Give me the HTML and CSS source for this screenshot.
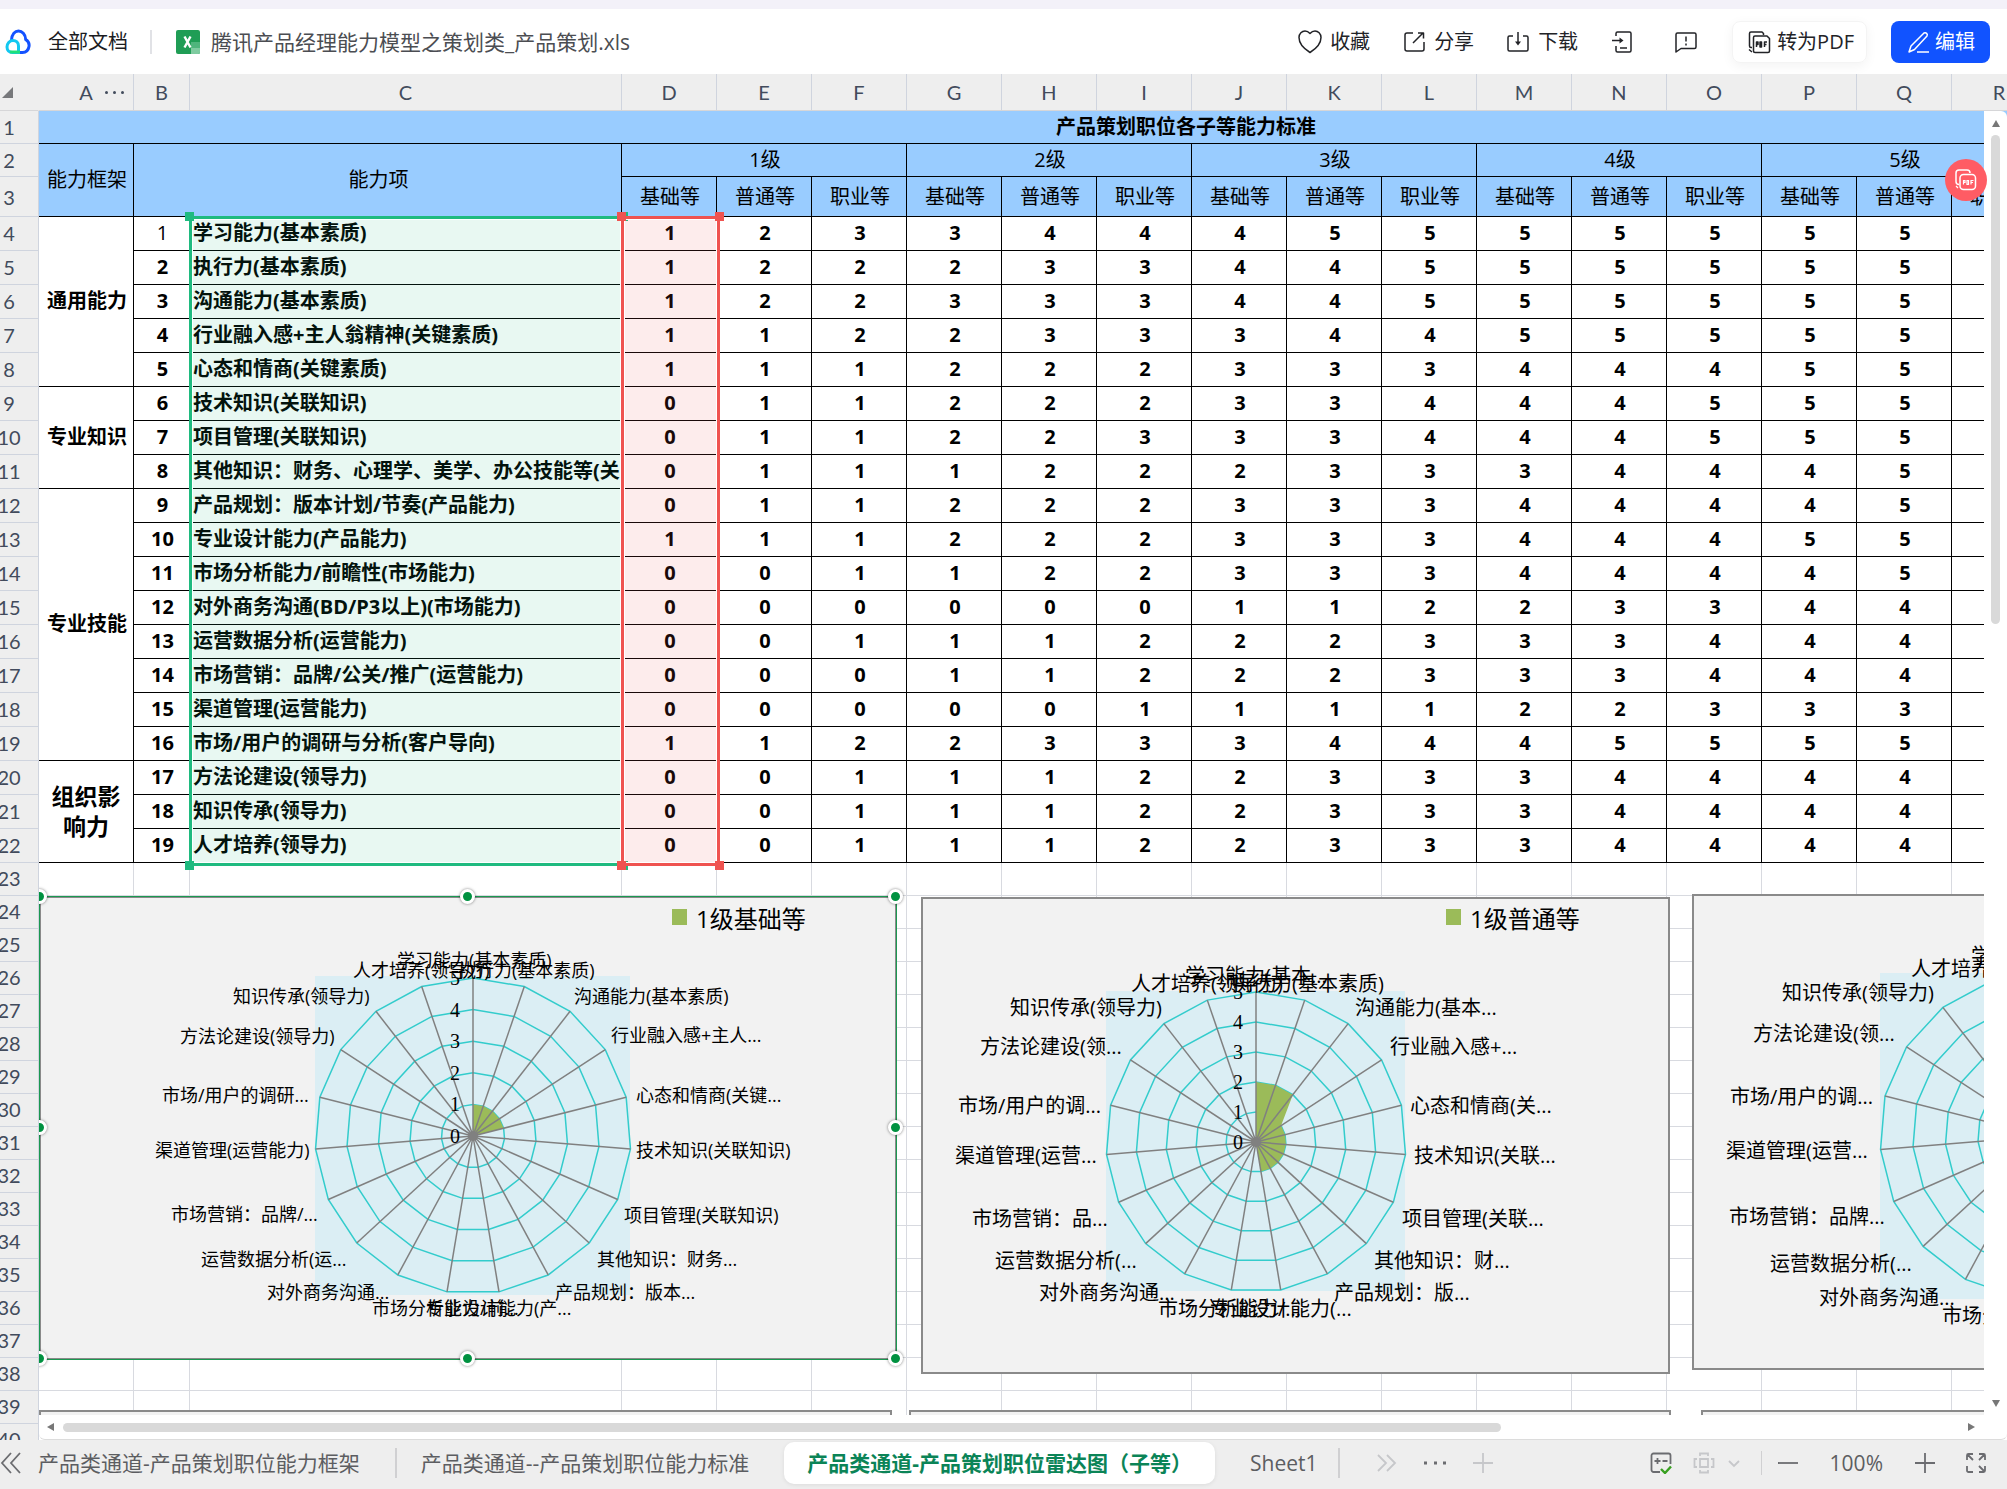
FILE: index.html
```html
<!DOCTYPE html>
<html lang="zh-CN">
<head>
<meta charset="utf-8">
<title>腾讯产品经理能力模型之策划类_产品策划.xls</title>
<link rel="stylesheet" href="styles.css">
</head>
<body>
<header class="topbar">
  <a class="home" href="#">
    <svg class="logo" width="26" height="26" viewBox="0 0 26 26" fill="none" stroke-width="3">
      <path d="M6.500 11C7 5 10 2 13.500 2s7 3 7.200 8.500c2.500 1.500 3.800 4 3.300 7-.6 3.500-3 6-6.500 6H15" stroke="#1452ff"/>
      <path d="M15 23.500H7.500C4 23.500 2 21 2 18c0-3.500 2.500-6.500 6-6.500 3 0 5.500 2 5.500 5.500v6.500" stroke="#12c8f0"/>
      <path d="M5 23h10" stroke="#1fe07a"/>
    </svg>
    <span>全部文档</span>
  </a>
  <span class="divider"></span>
  <div class="file">
    <svg width="24" height="24" viewBox="0 0 24 24">
      <rect width="24" height="24" rx="2" fill="#1f9d55"/>
      <path d="M15 12h9v10a2 2 0 0 1-2 2h-7z" fill="#4fb57c"/>
      <path d="M15 18h9v4a2 2 0 0 1-2 2h-7z" fill="#7fcba0"/>
      <path d="M8.500 6.500l6 11M14.500 6.500l-6 11" stroke="#fff" stroke-width="2.400" fill="none"/>
    </svg>
    <span>腾讯产品经理能力模型之策划类_产品策划.xls</span>
  </div>
  <div class="actions">
    <button class="action" type="button">
      <svg class="icon" viewBox="0 0 24 24"><path d="M12 22.500C8 20 1 14.500 1 7.500 1 3.500 4 1 7 1c2 0 3.500.8 5 2.500C13.500 1.800 15 1 17 1c3 0 6 2.500 6 6.500 0 7-7 12.500-11 15z"/></svg>
      <span>收藏</span>
    </button>
    <button class="action" type="button">
      <svg class="icon" viewBox="0 0 24 24"><path d="M11 3H5a2 2 0 0 0-2 2v14a2 2 0 0 0 2 2h15a2 2 0 0 0 2-2v-7M11 13 21 3M16 3h5.500v5.500"/></svg>
      <span>分享</span>
    </button>
    <button class="action" type="button">
      <svg class="icon" viewBox="0 0 24 24"><path d="M7 6H3.500A1.500 1.500 0 0 0 2 7.500v12A1.500 1.500 0 0 0 3.500 21h17a1.500 1.500 0 0 0 1.500-1.500v-12A1.500 1.500 0 0 0 20.500 6H17M12 2v12"/><path d="M9 11.500h6l-3 4z" fill="currentColor" stroke="none"/></svg>
      <span>下载</span>
    </button>
    <button class="action" type="button" aria-label="打开方式">
      <svg class="icon" viewBox="0 0 24 24"><path d="M6 6V3.500A1.500 1.500 0 0 1 7.500 2h12A1.500 1.500 0 0 1 21 3.500v17a1.500 1.500 0 0 1-1.500 1.500h-12A1.500 1.500 0 0 1 6 20.500V16M2 10.500h9M10 18h7"/><path d="M9.500 7.500 13.500 10.500l-4 3z" fill="currentColor" stroke="none"/></svg>
    </button>
    <button class="action comment" type="button" aria-label="反馈">
      <svg class="icon" viewBox="0 0 24 24"><path d="M2 22V4.500A1.500 1.500 0 0 1 3.500 3h17A1.500 1.500 0 0 1 22 4.500v12.500a1.500 1.500 0 0 1-1.500 1.500H7L2 22zM12 6.500v5M12 13.500v2"/></svg>
    </button>
    <button class="pdf" type="button">
      <svg class="icon" viewBox="0 0 24 24"><path d="M5 17.500H4A1.500 1.500 0 0 1 2.500 16V3.500A1.500 1.500 0 0 1 4 2h11l1.500 1.500V5M8 6h12l2.500 2.500V21a1.500 1.500 0 0 1-1.500 1.500H8A1.500 1.500 0 0 1 6.500 21V7.500A1.500 1.500 0 0 1 8 6zM2 19.500 5 22"/><path d="M9.500 17v-5h1.500v2.500H9.500M13 12v5h1.500v-5zM17.500 17v-5h2.500M17.500 14.500h2"/></svg>
      <span>转为PDF</span>
    </button>
    <button class="edit" type="button">
      <svg class="icon" viewBox="0 0 24 24"><path d="M3 22 5 16 18 3a2.200 2.200 0 0 1 3 3L8.500 19.500 3 22zM11 22h12"/></svg>
      <span>编辑</span>
    </button>
  </div>
</header>

<main class="sheet">
  <table class="grid">
    <colgroup>
      <col class="c-head"><col class="c-num"><col class="c-b"><col class="c-c">
      <col class="c-num" span="18">
    </colgroup>
    <thead>
      <tr class="letters"><th class="corner"></th><th class="letter-a">A<span class="more"><i></i><i></i><i></i></span></th><th>B</th><th>C</th><th>D</th><th>E</th><th>F</th><th>G</th><th>H</th><th>I</th><th>J</th><th>K</th><th>L</th><th>M</th><th>N</th><th>O</th><th>P</th><th>Q</th><th>R</th><th></th><th></th><th></th></tr>
    </thead>
    <tbody class="titles">
      <tr><th>1</th><td class="title" colspan="21">产品策划职位各子等能力标准</td></tr>
      <tr><th>2</th><td rowspan="2">能力框架</td><td colspan="2" rowspan="2">能力项</td><td colspan="3">1级</td><td colspan="3">2级</td><td colspan="3">3级</td><td colspan="3">4级</td><td colspan="3">5级</td><td colspan="3"></td></tr>
      <tr class="tall"><th>3</th><td>基础等</td><td>普通等</td><td>职业等</td><td>基础等</td><td>普通等</td><td>职业等</td><td>基础等</td><td>普通等</td><td>职业等</td><td>基础等</td><td>普通等</td><td>职业等</td><td>基础等</td><td>普通等</td><td>职业等</td><td></td><td></td><td></td></tr>
    </tbody>
    <tbody class="data">
      <tr><th>4</th><td rowspan="5">通用能力</td><td class="plain">1</td><td class="name">学习能力(基本素质)</td><td>1</td><td>2</td><td>3</td><td>3</td><td>4</td><td>4</td><td>4</td><td>5</td><td>5</td><td>5</td><td>5</td><td>5</td><td>5</td><td>5</td><td></td></tr>
      <tr><th>5</th><td>2</td><td class="name">执行力(基本素质)</td><td>1</td><td>2</td><td>2</td><td>2</td><td>3</td><td>3</td><td>4</td><td>4</td><td>5</td><td>5</td><td>5</td><td>5</td><td>5</td><td>5</td><td></td></tr>
      <tr><th>6</th><td>3</td><td class="name">沟通能力(基本素质)</td><td>1</td><td>2</td><td>2</td><td>3</td><td>3</td><td>3</td><td>4</td><td>4</td><td>5</td><td>5</td><td>5</td><td>5</td><td>5</td><td>5</td><td></td></tr>
      <tr><th>7</th><td>4</td><td class="name">行业融入感+主人翁精神(关键素质)</td><td>1</td><td>1</td><td>2</td><td>2</td><td>3</td><td>3</td><td>3</td><td>4</td><td>4</td><td>5</td><td>5</td><td>5</td><td>5</td><td>5</td><td></td></tr>
      <tr><th>8</th><td>5</td><td class="name">心态和情商(关键素质)</td><td>1</td><td>1</td><td>1</td><td>2</td><td>2</td><td>2</td><td>3</td><td>3</td><td>3</td><td>4</td><td>4</td><td>4</td><td>5</td><td>5</td><td></td></tr>
      <tr><th>9</th><td rowspan="3">专业知识</td><td>6</td><td class="name">技术知识(关联知识)</td><td>0</td><td>1</td><td>1</td><td>2</td><td>2</td><td>2</td><td>3</td><td>3</td><td>4</td><td>4</td><td>4</td><td>5</td><td>5</td><td>5</td><td></td></tr>
      <tr><th>10</th><td>7</td><td class="name">项目管理(关联知识)</td><td>0</td><td>1</td><td>1</td><td>2</td><td>2</td><td>3</td><td>3</td><td>3</td><td>4</td><td>4</td><td>4</td><td>5</td><td>5</td><td>5</td><td></td></tr>
      <tr><th>11</th><td>8</td><td class="name">其他知识：财务、心理学、美学、办公技能等(关联知识)</td><td>0</td><td>1</td><td>1</td><td>1</td><td>2</td><td>2</td><td>2</td><td>3</td><td>3</td><td>3</td><td>4</td><td>4</td><td>4</td><td>5</td><td></td></tr>
      <tr><th>12</th><td rowspan="8">专业技能</td><td>9</td><td class="name">产品规划：版本计划/节奏(产品能力)</td><td>0</td><td>1</td><td>1</td><td>2</td><td>2</td><td>2</td><td>3</td><td>3</td><td>3</td><td>4</td><td>4</td><td>4</td><td>4</td><td>5</td><td></td></tr>
      <tr><th>13</th><td>10</td><td class="name">专业设计能力(产品能力)</td><td>1</td><td>1</td><td>1</td><td>2</td><td>2</td><td>2</td><td>3</td><td>3</td><td>3</td><td>4</td><td>4</td><td>4</td><td>5</td><td>5</td><td></td></tr>
      <tr><th>14</th><td>11</td><td class="name">市场分析能力/前瞻性(市场能力)</td><td>0</td><td>0</td><td>1</td><td>1</td><td>2</td><td>2</td><td>3</td><td>3</td><td>3</td><td>4</td><td>4</td><td>4</td><td>4</td><td>5</td><td></td></tr>
      <tr><th>15</th><td>12</td><td class="name">对外商务沟通(BD/P3以上)(市场能力)</td><td>0</td><td>0</td><td>0</td><td>0</td><td>0</td><td>0</td><td>1</td><td>1</td><td>2</td><td>2</td><td>3</td><td>3</td><td>4</td><td>4</td><td></td></tr>
      <tr><th>16</th><td>13</td><td class="name">运营数据分析(运营能力)</td><td>0</td><td>0</td><td>1</td><td>1</td><td>1</td><td>2</td><td>2</td><td>2</td><td>3</td><td>3</td><td>3</td><td>4</td><td>4</td><td>4</td><td></td></tr>
      <tr><th>17</th><td>14</td><td class="name">市场营销：品牌/公关/推广(运营能力)</td><td>0</td><td>0</td><td>0</td><td>1</td><td>1</td><td>2</td><td>2</td><td>2</td><td>3</td><td>3</td><td>3</td><td>4</td><td>4</td><td>4</td><td></td></tr>
      <tr><th>18</th><td>15</td><td class="name">渠道管理(运营能力)</td><td>0</td><td>0</td><td>0</td><td>0</td><td>0</td><td>1</td><td>1</td><td>1</td><td>1</td><td>2</td><td>2</td><td>3</td><td>3</td><td>3</td><td></td></tr>
      <tr><th>19</th><td>16</td><td class="name">市场/用户的调研与分析(客户导向)</td><td>1</td><td>1</td><td>2</td><td>2</td><td>3</td><td>3</td><td>3</td><td>4</td><td>4</td><td>4</td><td>5</td><td>5</td><td>5</td><td>5</td><td></td></tr>
      <tr><th>20</th><td rowspan="3" class="large">组织影响力</td><td>17</td><td class="name">方法论建设(领导力)</td><td>0</td><td>0</td><td>1</td><td>1</td><td>1</td><td>2</td><td>2</td><td>3</td><td>3</td><td>3</td><td>4</td><td>4</td><td>4</td><td>4</td><td></td></tr>
      <tr><th>21</th><td>18</td><td class="name">知识传承(领导力)</td><td>0</td><td>0</td><td>1</td><td>1</td><td>1</td><td>2</td><td>2</td><td>3</td><td>3</td><td>3</td><td>4</td><td>4</td><td>4</td><td>4</td><td></td></tr>
      <tr><th>22</th><td>19</td><td class="name">人才培养(领导力)</td><td>0</td><td>0</td><td>1</td><td>1</td><td>1</td><td>2</td><td>2</td><td>3</td><td>3</td><td>3</td><td>4</td><td>4</td><td>4</td><td>4</td><td></td></tr>
    </tbody>
    <tbody class="blank" id="blank-rows"></tbody>
  </table>

  <div class="canvas" id="canvas">
    <div class="range range-green"><i></i><i></i><i></i><i></i></div>
    <div class="range range-red"><i></i><i></i><i></i><i></i></div>
  </div>

  <div class="scroll-y"><span class="arrow up"></span><span class="thumb"></span><span class="arrow down"></span></div>
  <div class="scroll-x"><span class="arrow left"></span><span class="track"><span class="thumb"></span></span><span class="arrow right"></span></div>

  <button class="float-pdf" type="button" aria-label="转为PDF">
    <svg width="24" height="24" viewBox="0 0 24 24" fill="none" stroke="#fff" stroke-width="1.500"><path d="M5 16.500a3 3 0 0 1-3-3V5a3 3 0 0 1 3-3h8a3 3 0 0 1 3 3"/><rect x="6" y="6.500" width="15.500" height="15" rx="3.500"/><path d="M9.500 16.500v-4H11v2H9.500M13 12.500v4h1.500v-4zM17 16.500v-4h2.500M17 14.500h2M2 18l2 2" stroke-width="1.200"/></svg>
  </button>
</main>

<footer class="tabbar">
  <button class="nav" type="button" aria-label="上一组"><svg width="22" height="22" viewBox="0 0 22 22"><path d="M11 1 2 11l9 10M20 1l-9 10 9 10"/></svg></button>
  <button class="tab" type="button">产品类通道-产品策划职位能力框架</button>
  <span class="sep"></span>
  <button class="tab" type="button">产品类通道--产品策划职位能力标准</button>
  <button class="tab active" type="button">产品类通道-产品策划职位雷达图（子等）</button>
  <button class="tab last" type="button">Sheet1</button>
  <span class="sep"></span>
  <div class="tab-tools">
    <button class="nav dim" type="button" aria-label="下一组"><svg width="22" height="22" viewBox="0 0 22 22"><path d="M2 3l8 8-8 8M11 3l8 8-8 8"/></svg></button>
    <button class="nav" type="button" aria-label="更多"><svg width="22" height="22" viewBox="0 0 22 22"><path d="M0 11h3M10 11h3M19 11h3" stroke-width="3"/></svg></button>
    <button class="nav dim" type="button" aria-label="新建工作表"><svg width="22" height="22" viewBox="0 0 22 22"><path d="M1 11h20M11 1v20"/></svg></button>
  </div>
  <div class="view-tools">
    <button class="nav" type="button" aria-label="校对"><svg width="22" height="22" viewBox="0 0 22 22"><path d="M10 20H3.500A2 2 0 0 1 1.500 18V3.500a2 2 0 0 1 2-2h15a2 2 0 0 1 2 2V12M4.500 9h6M7.500 6v6M12.500 9h5"/><path d="M11 17l4 4 6-6.500" stroke="#38a020" stroke-width="2.400"/></svg></button>
    <button class="nav dim" type="button" aria-label="阅读模式"><svg width="22" height="22" viewBox="0 0 22 22"><path d="M7 7h8v8H7zM7 4V1.500h8V4M7 18v2.500h8V18M4 7H1.500v8H4M18 7h2.500v8H18"/></svg></button>
    <button class="nav dim chevron" type="button" aria-label="展开"><svg width="12" height="22" viewBox="0 0 12 22"><path d="M1 9l5 5 5-5"/></svg></button>
    <span class="sep thin"></span>
    <button class="nav" type="button" aria-label="缩小"><svg width="22" height="22" viewBox="0 0 22 22"><path d="M1 11h20"/></svg></button>
    <span class="zoom">100%</span>
    <button class="nav" type="button" aria-label="放大"><svg width="22" height="22" viewBox="0 0 22 22"><path d="M1 11h20M11 1v20"/></svg></button>
    <button class="nav full" type="button" aria-label="全屏"><svg width="22" height="22" viewBox="0 0 22 22"><path d="M8 2H3.500A1.500 1.500 0 0 0 2 3.500V8M14 2h4.500A1.500 1.500 0 0 1 20 3.500V8M8 20H3.500A1.500 1.500 0 0 1 2 18.500V14M14 20h4.500a1.500 1.500 0 0 0 1.500-1.500V14M14 8l6-6M14 14l6 6M2 2l6 6"/></svg></button>
  </div>
</footer>
<script src="charts.js"></script>
</body>
</html>
```
FILE: styles.css
```css
* { box-sizing: border-box; }

body {
  margin: 0;
  height: 100vh;
  display: flex;
  flex-direction: column;
  border-top: 9px solid #f3f1f9;
  background: #fff;
  color: #000;
  font: 20px/28px "Open Sans", "Noto Sans CJK SC", sans-serif;
}

button {
  padding: 0;
  border: 0;
  background: none;
  color: inherit;
  font: inherit;
  white-space: nowrap;
}

/* top bar */
.topbar {
  flex: none;
  display: flex;
  align-items: center;
  height: 65px;
  padding: 0 17px 0 5px;
  white-space: nowrap;
}
.home {
  display: flex;
  align-items: center;
  gap: 17px;
  color: #1b1c1f;
  text-decoration: none;
}
.divider { width: 2px; height: 24px; margin: 0 24px 0 22px; background: #e1e2e6; }
.file { display: flex; align-items: center; gap: 11px; color: #4b4d52; font-size: 21px; }
.actions { display: flex; align-items: center; gap: 32px; margin-left: auto; color: #222327; }
.action { display: flex; align-items: center; gap: 8px; }
.action.comment { margin: 0 2px 0 8px; }
.icon { width: 24px; height: 24px; fill: none; stroke: currentColor; stroke-width: 1.5; stroke-linejoin: round; }
.pdf, .edit { display: flex; align-items: center; height: 42px; gap: 6px; border-radius: 8px; }
.pdf {
  padding: 0 12px 0 14px;
  border: 1px solid #f4f4f4;
  box-shadow: 0 3px 12px rgba(0, 0, 0, .05);
}
.edit { padding: 0 15px; margin-left: -8px; gap: 5px; background: #1153ff; color: #fff; }

/* spreadsheet */
.sheet {
  position: relative;
  flex: 1;
  min-height: 0;
  overflow: hidden;
  background: #eee;
}
.grid {
  width: 2352px;
  margin-left: -20px;
  table-layout: fixed;
  border-collapse: separate;
  border-spacing: 0;
}
.c-head { width: 59px; }
.c-num { width: 95px; }
.c-b { width: 56px; }
.c-c { width: 432px; }
.grid th, .grid td {
  padding: 0;
  overflow: hidden;
  text-align: center;
  vertical-align: middle;
  white-space: nowrap;
  line-height: 28px;
  border: solid #d8dae0;
  border-width: 0 1px 1px 0;
}
.grid th {
  background: #eee;
  border-color: #cfd4de;
  color: #424b5c;
  font-family: Lato, sans-serif;
  font-weight: 400;
}
.grid td { padding-left: 2px; background: #fff; }
.letters th { position: relative; height: 37px; border-bottom-color: #d6d6d8; }
.letters .corner { border-right-color: #eee; }
.corner::after {
  content: "";
  position: absolute;
  right: 25px;
  top: 13px;
  border: solid transparent;
  border-width: 0 0 11px 11px;
  border-bottom-color: #77787b;
}
.more { position: absolute; right: 9px; top: 17px; display: flex; gap: 5px; }
.more i { width: 3px; height: 3px; border-radius: 50%; background: #424b5c; }
.titles tr { height: 33px; }
.titles .tall { height: 40px; }
.titles td { background: #9cf; border-color: #000; }
.titles .title { font-weight: 700; }
.data tr { height: 34px; }
.data td { border-color: #000; font-weight: 700; padding-bottom: 2px; }
.data th, .blank th { padding-bottom: 2px; }
.data .plain { font-weight: 400; }
.data .name { padding-left: 3px; text-align: left; }
.data .large { font-size: 23px; line-height: 30px; white-space: normal; padding: 0 12px 2px; }
.blank tr { height: 33px; }

/* objects floating above the cells */
.canvas { position: absolute; inset: 37px 23px 25px 39px; overflow: hidden; }
.range { position: absolute; top: 105px; height: 650px; border: 3px solid; box-shadow: inset 0 0 0 1px #fff; }
.range-green { left: 150px; width: 435px; color: #1fba7f; background: rgba(31, 186, 127, .1); }
.range-red { left: 582px; width: 99px; color: #ef5350; background: rgba(239, 83, 80, .11); }
.range i { position: absolute; width: 9px; height: 9px; background: currentColor; }
.range i:nth-child(1) { left: -7px; top: -7px; }
.range i:nth-child(2) { right: -7px; top: -7px; }
.range i:nth-child(3) { left: -7px; bottom: -7px; }
.range i:nth-child(4) { right: -7px; bottom: -7px; }

.chart { position: absolute; display: block; }
.chart .frame { fill: #f2f2f2; stroke: #8a8a8a; stroke-width: 2; }
.chart .plot { fill: #dbeef4; }
.chart .area, .chart .key { fill: #9bbb59; }
.chart .ring { fill: none; stroke: #33cccc; stroke-width: 1.5; }
.chart .spoke { stroke: #808080; stroke-width: 1.5; }
.chart .hub { fill: #808080; }
.chart .scale { font-family: "Liberation Serif", serif; text-anchor: middle; }
.chart .small { font-size: 18px; }
.chart .legend { font-size: 24px; }
.outline { position: absolute; border: 1px solid #1a9850; }
.outline i {
  position: absolute;
  width: 15px;
  height: 15px;
  margin: -8px;
  border: 3px solid #fff;
  border-radius: 50%;
  background: #009140;
  box-shadow: 0 0 3px rgba(0, 0, 0, .5);
}

/* scrollbars */
.scroll-y {
  position: absolute;
  top: 37px;
  right: 0;
  bottom: 1px;
  width: 23px;
  padding: 9px 0 32px;
  display: flex;
  flex-direction: column;
  align-items: center;
  background: #fff;
  border-radius: 0 6px 0 0;
}
.scroll-x {
  position: absolute;
  left: 39px;
  right: 0;
  bottom: 0;
  height: 25px;
  padding: 0 32px 0 8px;
  display: flex;
  align-items: center;
  background: #fff;
  border-bottom: 1px solid #dcdcdc;
  border-radius: 0 0 6px 6px;
}
.thumb { display: block; border-radius: 5px; background: #d9d9d9; }
.scroll-y .thumb { width: 9px; height: 38%; margin-top: 8px; }
.scroll-x .track { flex: 1; margin: 0 0 0 9px; }
.scroll-x .thumb { width: 75.5%; height: 9px; }
.arrow { border: 4px solid transparent; }
.arrow.up { border-bottom: 7px solid #777; border-top: 0; }
.arrow.down { border-top: 7px solid #777; border-bottom: 0; margin-top: auto; }
.arrow.left { border-right: 7px solid #777; border-left: 0; }
.arrow.right { border-left: 7px solid #777; border-right: 0; }

.float-pdf {
  position: absolute;
  top: 85px;
  right: 20px;
  width: 42px;
  height: 42px;
  display: grid;
  place-items: center;
  border-radius: 50%;
  background: #ff5c64;
}

/* sheet tabs */
.tabbar {
  flex: none;
  display: flex;
  align-items: center;
  height: 49px;
  padding: 0 20px 3px 0;
  background: #eee;
  color: #5c5d61;
  font-size: 21px;
  white-space: nowrap;
}
.nav { display: flex; color: #6b6c70; }
.nav svg { fill: none; stroke: currentColor; stroke-width: 1.8; }
.nav.dim { color: #c6c7ca; }
.tab { padding: 0 35px; height: 42px; }
.nav + .tab { padding-left: 16px; }
.sep + .tab { padding-left: 24px; }
.tab.last { padding-right: 20px; }
.tab.active {
  padding: 0 23px;
  border-radius: 10px;
  background: #fff;
  box-shadow: 0 1px 4px rgba(0, 0, 0, .08);
  color: #0b8457;
  font-weight: 700;
}
.sep { width: 2px; height: 30px; background: #d0d0d2; }
.sep.thin { width: 1px; height: 24px; margin-right: -6px; }
.tab-tools { display: flex; align-items: center; gap: 26px; margin-left: 36px; }
.view-tools { display: flex; align-items: center; gap: 21px; margin-left: auto; }
.chevron { margin-left: -8px; }
.zoom { margin: 0 10px; }
.full { margin-left: 8px; }
```
FILE: charts.js
```js
// Empty rows below the data, down to the bottom of the window.
const blank = document.getElementById('blank-rows');
for (let row = 23; row <= 40; row++) {
  blank.insertAdjacentHTML('beforeend', `<tr><th>${row}</th>${'<td></td>'.repeat(21)}</tr>`);
}

// Objects use sheet coordinates; ORIGIN is the top left corner of cell A1.
const ORIGIN = { x: 39, y: 111 };
const AXES = 19;

const charts = [
  {
    box: [39, 896, 858, 464], plot: [315, 976, 315, 319], center: [473, 1136], radius: 158, small: true,
    legend: ['1级基础等', 672, 909], scaleX: 455, selected: true,
    values: [1, 1, 1, 1, 1, 0, 0, 0, 0, 1, 0, 0, 0, 0, 0, 1, 0, 0, 0],
    labels: [
      ['学习能力(基本素质)', 397, 960], ['执行力(基本素质)', 458, 970], ['沟通能力(基本素质)', 574, 996],
      ['行业融入感+主人...', 611, 1035], ['心态和情商(关键...', 636, 1095], ['技术知识(关联知识)', 636, 1150],
      ['项目管理(关联知识)', 624, 1215], ['其他知识：财务...', 597, 1259], ['产品规划：版本...', 555, 1292],
      ['专业设计能力(产...', 426, 1308], ['市场分析能力/前...', 372, 1308], ['对外商务沟通...', 267, 1292],
      ['运营数据分析(运...', 201, 1259], ['市场营销：品牌/...', 171, 1214], ['渠道管理(运营能力)', 155, 1150],
      ['市场/用户的调研...', 162, 1095], ['方法论建设(领导力)', 180, 1036], ['知识传承(领导力)', 233, 996],
      ['人才培养(领导力)', 353, 970]
    ]
  },
  {
    box: [921, 897, 749, 477], plot: [1106, 991, 299, 300], center: [1256, 1142], radius: 150,
    legend: ['1级普通等', 1446, 909], scaleX: 1238,
    values: [2, 2, 2, 1, 1, 1, 1, 1, 1, 1, 0, 0, 0, 0, 0, 1, 0, 0, 0],
    labels: [
      ['学习能力(基本...', 1185, 976], ['执行力(基本素质)', 1232, 984], ['沟通能力(基本...', 1355, 1008],
      ['行业融入感+...', 1390, 1047], ['心态和情商(关...', 1410, 1106], ['技术知识(关联...', 1414, 1156],
      ['项目管理(关联...', 1402, 1219], ['其他知识：财...', 1374, 1261], ['产品规划：版...', 1334, 1293],
      ['专业设计能力(...', 1210, 1309], ['市场分析能力/...', 1158, 1309], ['对外商务沟通...', 1039, 1293],
      ['运营数据分析(...', 995, 1261], ['市场营销：品...', 972, 1219], ['渠道管理(运营...', 955, 1156],
      ['市场/用户的调...', 958, 1106], ['方法论建设(领...', 980, 1047], ['知识传承(领导力)', 1010, 1008],
      ['人才培养(领导力)', 1131, 984]
    ]
  },
  {
    box: [1692, 894, 748, 476], plot: [1880, 973, 326, 326], center: [2043, 1136], radius: 163,
    values: [],
    labels: [
      ['学习能力(基本...', 1971, 956], ['市场分析能力/...', 1942, 1316], ['对外商务沟通...', 1819, 1298],
      ['运营数据分析(...', 1770, 1264], ['市场营销：品牌...', 1729, 1217], ['渠道管理(运营...', 1726, 1151],
      ['市场/用户的调...', 1730, 1097], ['方法论建设(领...', 1753, 1034], ['知识传承(领导力)', 1782, 993],
      ['人才培养(领导力)', 1911, 969]
    ]
  },
  { box: [39, 1410, 853, 470] },
  { box: [909, 1410, 762, 470] },
  { box: [1701, 1410, 748, 470] }
];

function vertex([cx, cy], r, i) {
  const angle = (i * 2 * Math.PI) / AXES;
  return [cx + r * Math.sin(angle), cy - r * Math.cos(angle)];
}

function radar({ plot, center, radius, values, labels, legend, scaleX, small }) {
  const axes = [...Array(AXES).keys()];
  const polygon = (cls, radii) =>
    `<polygon class="${cls}" points="${axes.map(i => vertex(center, radii(i), i).join()).join(' ')}"/>`;
  let out = `<rect class="plot" x="${plot[0]}" y="${plot[1]}" width="${plot[2]}" height="${plot[3]}"/>`;
  for (let step = 1; step <= 5; step++) out += polygon('ring', () => (radius * step) / 5);
  if (values.length) out += polygon('area', i => (radius * values[i]) / 5);
  for (const i of axes) {
    const [x, y] = vertex(center, radius, i);
    out += `<line class="spoke" x1="${center[0]}" y1="${center[1]}" x2="${x}" y2="${y}"/>`;
  }
  out += `<circle class="hub" cx="${center[0]}" cy="${center[1]}" r="5"/>`;
  if (scaleX) {
    for (let step = 0; step <= 5; step++) {
      out += `<text class="scale" x="${scaleX}" y="${center[1] + 7 - (radius * step) / 5}">${step}</text>`;
    }
  }
  for (const [text, x, y] of labels) {
    out += `<text class="${small ? 'small' : ''}" x="${x}" y="${y + 7}">${text}</text>`;
  }
  if (legend) {
    const [text, x, y] = legend;
    out += `<rect class="key" x="${x}" y="${y}" width="15" height="16"/>`;
    out += `<text class="legend" x="${x + 24}" y="${y + 19}">${text}</text>`;
  }
  return out;
}

const canvas = document.getElementById('canvas');
for (const chart of charts) {
  const [x, y, w, h] = chart.box;
  const place = `left:${x - ORIGIN.x}px;top:${y - ORIGIN.y}px;width:${w}px;height:${h}px`;
  canvas.insertAdjacentHTML('beforeend',
    `<svg class="chart" style="${place}" viewBox="${x} ${y} ${w} ${h}">` +
    `<rect class="frame" x="${x + 1}" y="${y + 1}" width="${w - 2}" height="${h - 2}"/>` +
    (chart.plot ? radar(chart) : '') + '</svg>');
  if (chart.selected) {
    const handles = [[0, 0], [50, 0], [100, 0], [0, 50], [100, 50], [0, 100], [50, 100], [100, 100]];
    canvas.insertAdjacentHTML('beforeend',
      `<div class="outline" style="${place}">` +
      handles.map(([hx, hy]) => `<i style="left:${hx}%;top:${hy}%"></i>`).join('') + '</div>');
  }
}
```
